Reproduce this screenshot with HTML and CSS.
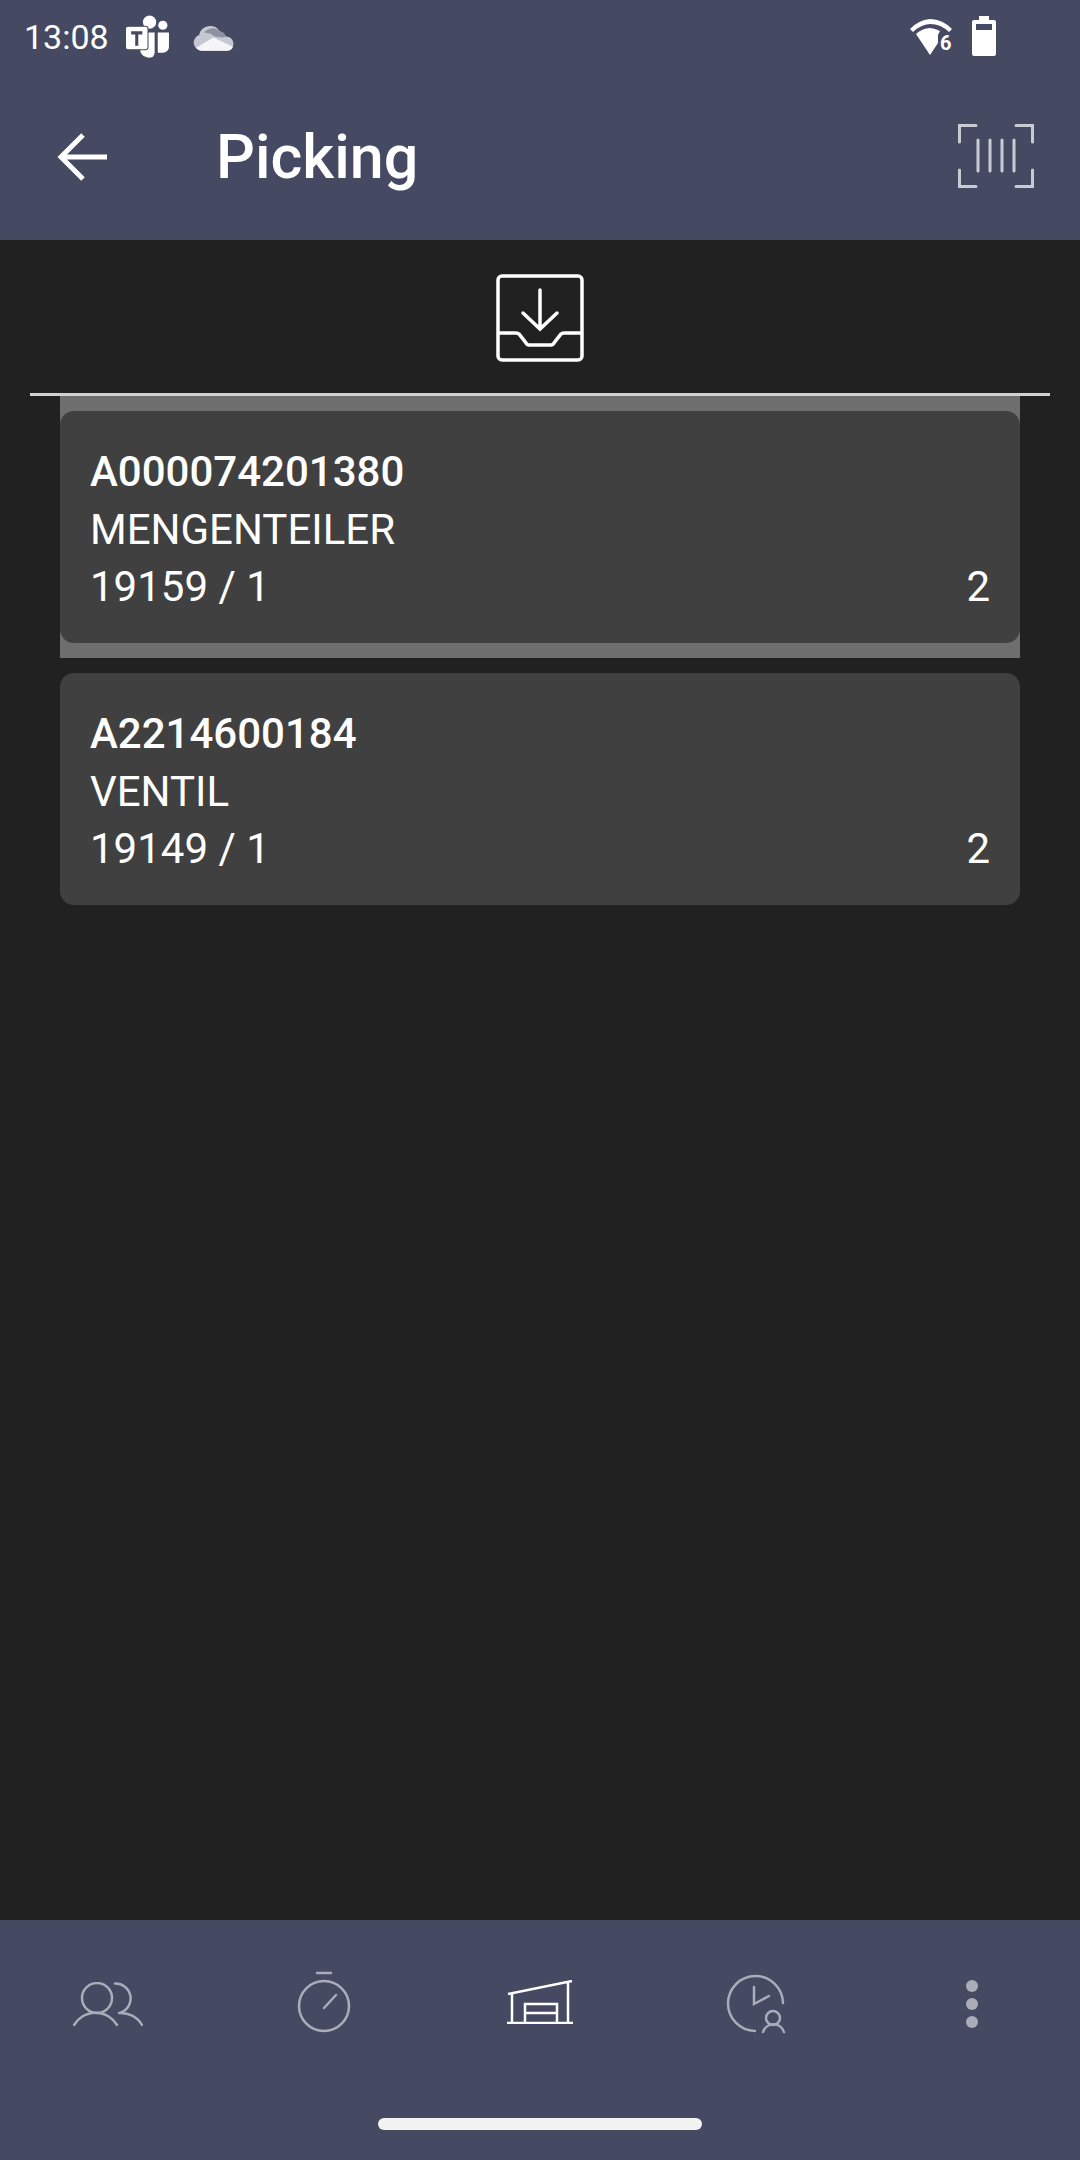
FILE: index.html
```html
<!DOCTYPE html>
<html lang="en">
<head>
    <meta charset="UTF-8">
    <meta name="viewport" content="width=device-width, initial-scale=1.0">
    <title>Picking</title>
    <link rel="stylesheet" href="styles.css">
</head>
<body>
    <div class="app">
        <header class="app-header">
            <div class="status-bar">
                <span class="status-time">13:08</span>
                <svg class="icon-teams" viewBox="0 0 44 44">
                    <circle cx="24" cy="7" r="6.5" fill="#fff"/>
                    <circle cx="37" cy="10" r="4.5" fill="#fff"/>
                    <path d="M16 17h13v20a6 6 0 0 1-2 4 10 10 0 0 1-11-3 6 6 0 0 1-1-3z" fill="#fff"/>
                    <path d="M32 17h11v14a6 6 0 0 1-6 6h-5z" fill="#fff"/>
                    <path d="M30 17v18" stroke="#454962" stroke-width="1.5"/>
                    <rect x="0.5" y="11" width="22" height="23" rx="2.5" fill="#fff" stroke="#454962" stroke-width="1"/>
                    <path d="M6 16h11v3h-4v11h-3V19H6z" fill="#454962"/>
                </svg>
                <svg class="icon-cloud" viewBox="0 0 40 26">
                    <path d="M8 26a8 8 0 0 1-2-15.5A11 11 0 0 1 26 7a8 8 0 0 1 6 5 7 7 0 0 1 1 14z" fill="#c5c7d1"/>
                    <path d="M11 8a10 10 0 0 1 15-1 8 8 0 0 1 6 5l-3 1-8-1-4-3z" fill="#8d90a3"/>
                    <path d="M3 23l17-10 19 9a6 6 0 0 1-6 4H8a8 8 0 0 1-5-3z" fill="#f6f6f8"/>
                </svg>
                <span class="status-spacer"></span>
                <svg class="icon-wifi" viewBox="0 0 42 36">
                    <path d="M0 10A32 32 0 0 1 20 0a32 32 0 0 1 22 10l-3 3A28 28 0 0 0 20 5 28 28 0 0 0 3 13z" fill="#fff"/>
                    <path d="M6 15a24 24 0 0 1 14-6 24 24 0 0 1 10 3l-2 4v8l-8 12z" fill="#fff"/>
                    <text x="30" y="31" class="wifi-label">6</text>
                </svg>
                <svg class="icon-battery" viewBox="0 0 24 40">
                    <path d="M7 0h10v4h5a2 2 0 0 1 2 2v32a2 2 0 0 1-2 2H2a2 2 0 0 1-2-2V6a2 2 0 0 1 2-2h5z" fill="#fff"/>
                    <rect x="4" y="8" width="16" height="6" fill="#454962"/>
                </svg>
            </div>
            <div class="toolbar">
                <svg class="icon-back" viewBox="0 0 50 50">
                    <path d="M50 25H4M26 3L4 25l22 22" fill="none" stroke="#fff" stroke-width="5"/>
                </svg>
                <h1 class="toolbar-title">Picking</h1>
                <svg class="icon-scan" viewBox="0 0 76 64">
                    <path d="M1.5 18V1.5H18M58 1.5h16.5V18M1.5 46v16.5H18M58 62.5h16.5V46" fill="none" stroke="#c9cbd2" stroke-width="3" stroke-linecap="round"/>
                    <path d="M20 16v31M32 16v31M44 16v31M56 16v31" fill="none" stroke="#c9cbd2" stroke-width="3" stroke-linecap="round"/>
                </svg>
            </div>
        </header>

        <main class="content">
            <div class="tab-row">
                <svg class="icon-inbox" viewBox="0 0 88 88">
                    <rect x="2" y="2" width="84" height="84" rx="4" fill="none" stroke="#fff" stroke-width="3.5"/>
                    <path d="M2 59h18q2 0 3 1l7 9q1 2 3 2h22q2 0 3-2l7-9q1-1 3-1h19" fill="none" stroke="#fff" stroke-width="3.5"/>
                    <path d="M44 16v39M27 39l17 16 17-16" fill="none" stroke="#fff" stroke-width="3.5" stroke-linecap="round"/>
                </svg>
            </div>
            <div class="divider"></div>
            <div class="pick-list">
                <div class="pick-row selected">
                    <div class="pick-card">
                        <div class="pick-number">A000074201380</div>
                        <div class="pick-name">MENGENTEILER</div>
                        <div class="pick-meta"><span>19159 / 1</span><span>2</span></div>
                    </div>
                </div>
                <div class="pick-row">
                    <div class="pick-card">
                        <div class="pick-number">A2214600184</div>
                        <div class="pick-name">VENTIL</div>
                        <div class="pick-meta"><span>19149 / 1</span><span>2</span></div>
                    </div>
                </div>
            </div>
        </main>

        <footer class="bottom-bar">
            <nav class="nav-items">
                <div class="nav-item">
                    <svg class="icon-people" viewBox="0 0 70 44">
                        <circle cx="24" cy="16" r="15" fill="none" stroke="#aaacb8" stroke-width="2.5"/>
                        <path d="M1 43a25 25 0 0 1 43 0M42 1.5a15 15 0 0 1 6 29M46 31a24 24 0 0 1 23 12" fill="none" stroke="#aaacb8" stroke-width="2.5" stroke-linecap="round"/>
                    </svg>
                </div>
                <div class="nav-item">
                    <svg class="icon-timer" viewBox="0 0 54 62">
                        <path d="M20 2h14M27 37l12-13" fill="none" stroke="#aaacb8" stroke-width="2.5" stroke-linecap="round"/>
                        <circle cx="27" cy="35" r="25" fill="none" stroke="#aaacb8" stroke-width="2.5"/>
                    </svg>
                </div>
                <div class="nav-item">
                    <svg class="icon-garage" viewBox="0 0 66 44">
                        <path d="M1 14L65 1M5 13v30M61 2v41M0 43h66M18 43V24h32v19M18 33h32" fill="none" stroke="#fff" stroke-width="2.5"/>
                    </svg>
                </div>
                <div class="nav-item">
                    <svg class="icon-shift" viewBox="0 0 60 60">
                        <path d="M57 29A27.5 27.5 0 1 0 29 57" fill="none" stroke="#aaacb8" stroke-width="2.5" stroke-linecap="round"/>
                        <path d="M28 13v17l15-8" fill="none" stroke="#aaacb8" stroke-width="2.5" stroke-linecap="round"/>
                        <circle cx="47" cy="44" r="7" fill="none" stroke="#aaacb8" stroke-width="2.5"/>
                        <path d="M37 58a11 11 0 0 1 21 0" fill="none" stroke="#aaacb8" stroke-width="2.5" stroke-linecap="round"/>
                    </svg>
                </div>
                <div class="nav-item">
                    <div class="more-dots"><span></span><span></span><span></span></div>
                </div>
            </nav>
            <div class="home-pill"></div>
        </footer>
    </div>
</body>
</html>
```

FILE: styles.css
```css
body, html {
    height: 100%;
    margin: 0;
    font-family: Roboto, Arial, sans-serif;
    background-color: #212121;
    color: #fff;
}
.app {
    display: flex;
    flex-direction: column;
    height: 2160px;
}
.app-header {
    height: 240px;
    flex-shrink: 0;
    background-color: #454962;
}
.status-bar {
    display: flex;
    align-items: center;
    height: 74px;
    padding-left: 24px;
}
.status-time {
    font-size: 34px;
    line-height: 74px;
    width: 101px;
}
.icon-teams {
    width: 45px;
    height: 45px;
    margin-right: 23px;
}
.icon-cloud {
    width: 41px;
    height: 27px;
}
.status-spacer {
    flex: 1;
}
.icon-wifi {
    width: 42px;
    height: 36px;
    margin-right: 20px;
    overflow: visible;
}
.icon-battery {
    width: 24px;
    height: 40px;
    margin-right: 84px;
    margin-bottom: 3px;
}
.wifi-label {
    font-size: 20px;
    font-weight: 700;
    fill: #fff;
}
.toolbar {
    display: flex;
    align-items: center;
    height: 166px;
    padding: 0 46px 0 57px;
}
.icon-back {
    width: 50px;
    height: 50px;
    margin-right: 109px;
}
.toolbar-title {
    flex: 1;
    margin: 0;
    font-size: 61px;
    font-weight: 500;
}
.icon-scan {
    width: 76px;
    height: 64px;
    margin-bottom: 2px;
}
.content {
    flex: 1;
}
.tab-row {
    display: flex;
    justify-content: center;
    padding-top: 34px;
    height: 119px;
    box-sizing: content-box;
}
.icon-inbox {
    width: 88px;
    height: 88px;
}
.divider {
    height: 3px;
    margin: 0 30px;
    background-color: #d2d2d2;
}
.pick-list {
    padding: 0 60px;
}
.pick-row {
    padding: 15px 0;
}
.pick-row.selected {
    background-color: #6e6e6e;
}
.pick-card {
    height: 232px;
    box-sizing: border-box;
    padding: 32px 30px 0;
    border-radius: 14px;
    background-color: #404040;
    font-size: 42px;
    line-height: 58px;
}
.pick-number {
    font-weight: 500;
}
.pick-meta {
    display: flex;
    justify-content: space-between;
    margin-top: -1px;
}
.bottom-bar {
    height: 240px;
    flex-shrink: 0;
    display: flex;
    flex-direction: column;
    align-items: center;
    background-color: #454962;
}
.nav-items {
    display: grid;
    grid-template-columns: repeat(5, 1fr);
    width: 100%;
    height: 168px;
    align-items: center;
    justify-items: center;
}
.nav-item {
    display: flex;
    align-items: center;
    justify-content: center;
}
.icon-people {
    width: 70px;
    height: 44px;
}
.icon-timer {
    width: 54px;
    height: 62px;
    margin-bottom: 5px;
}
.icon-garage {
    width: 66px;
    height: 44px;
    margin-bottom: 4px;
}
.icon-shift {
    width: 60px;
    height: 60px;
}
.more-dots {
    display: flex;
    flex-direction: column;
    gap: 6px;
}
.more-dots span {
    width: 12px;
    height: 12px;
    border-radius: 50%;
    background-color: #aaacb8;
}
.home-pill {
    width: 324px;
    height: 12px;
    margin-top: 30px;
    border-radius: 6px;
    background-color: #f2f2f2;
}
```
